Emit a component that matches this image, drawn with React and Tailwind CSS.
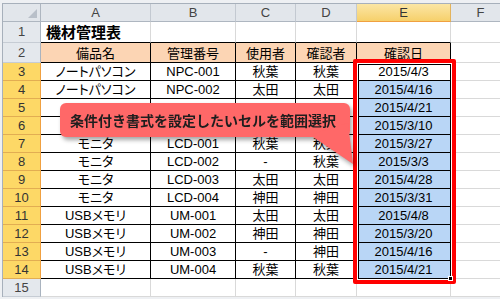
const rows = [
  ['ノートパソコン', 'NPC-001', '秋葉', '秋葉', '2015/4/3'],
  ['ノートパソコン', 'NPC-002', '太田', '太田', '2015/4/16'],
  ['', '', '', '', '2015/4/21'],
  ['', '', '', '', '2015/3/10'],
  ['モニタ', 'LCD-001', '秋葉', '秋葉', '2015/3/27'],
  ['モニタ', 'LCD-002', '-', '秋葉', '2015/3/3'],
  ['モニタ', 'LCD-003', '太田', '太田', '2015/4/28'],
  ['モニタ', 'LCD-004', '神田', '神田', '2015/3/31'],
  ['USBメモリ', 'UM-001', '太田', '太田', '2015/4/8'],
  ['USBメモリ', 'UM-002', '神田', '神田', '2015/3/20'],
  ['USBメモリ', 'UM-003', '-', '神田', '2015/4/16'],
  ['USBメモリ', 'UM-004', '秋葉', '秋葉', '2015/4/21'],
]

const headers = ['備品名', '管理番号', '使用者', '確認者', '確認日']

function ColHead({ label, active }) {
  if (active) {
    return (
      <div className="flex items-center justify-center border-r border-b border-r-[#e3b35c] border-b-[#f0a040] bg-linear-to-b from-[#fbe6a4] to-[#f6d06a] text-[#333]">
        {label}
      </div>
    )
  }
  return (
    <div className="flex items-center justify-center border-r border-b border-r-[#c3c9d1] border-b-[#aeb6c0] bg-[#e2e6eb] text-[#444]">
      {label}
    </div>
  )
}

function RowHead({ n, active }) {
  if (active) {
    return (
      <div className="flex items-center justify-center border-r border-b border-r-[#f0a040] border-b-[#e2ad52] bg-[#fdd866] text-[#333]">
        {n}
      </div>
    )
  }
  return (
    <div className="flex items-center justify-center border-r border-b border-r-[#a9b3bf] border-b-[#c6ccd4] bg-[#e4e8ed] text-[#444]">
      {n}
    </div>
  )
}

function Cell({ children, className = '' }) {
  return (
    <div className={'flex items-center justify-center whitespace-nowrap ' + className}>
      {children}
    </div>
  )
}

const grid = 'border-r border-b border-[#d9d9d9]'
const black = 'border-r border-b border-black'

export default function App() {
  return (
    <div className="relative w-[500px] h-[299px] overflow-hidden bg-[#eef0f3] pt-[3px] pl-[2px] font-['Liberation_Sans','Noto_Sans_CJK_JP',sans-serif] text-[13px] text-black">
      <div className="grid grid-cols-[38px_110px_85px_60px_61px_94px_60px] grid-rows-[18px_21px_20px_repeat(12,18px)_18px] border-t border-l border-[#a7b0bb] bg-white">
        {/* column headers */}
        <div className="relative border-r border-b border-r-[#aeb6c0] border-b-[#aeb6c0] bg-[#e2e6eb]">
          <svg className="absolute right-[3px] bottom-[3px]" width="9" height="9" viewBox="0 0 9 9">
            <polygon points="9,0 9,9 0,9" fill="#b9c0c9" />
          </svg>
        </div>
        {['A', 'B', 'C', 'D', 'E', 'F'].map((c) => (
          <ColHead key={c} label={c} active={c === 'E'} />
        ))}

        {/* row 1 */}
        <RowHead n={1} />
        <div className="flex items-center pl-[5px] border-r border-b border-r-[#d9d9d9] border-b-black text-[15px] font-bold font-['Noto_Sans_CJK_JP',sans-serif]">
          機材管理表
        </div>
        <div className="border-r border-b border-r-[#d9d9d9] border-b-black" />
        <div className="border-r border-b border-r-[#d9d9d9] border-b-black" />
        <div className="border-r border-b border-r-[#d9d9d9] border-b-black" />
        <div className="border-r border-b border-r-[#d9d9d9] border-b-black" />
        <div className={grid} />

        {/* row 2 */}
        <RowHead n={2} />
        {headers.map((h) => (
          <Cell key={h} className={black + ' bg-[#fcd5b4] font-[Noto_Sans_CJK_JP]'}>
            {h}
          </Cell>
        ))}
        <div className={grid} />

        {/* data rows */}
        {rows.map((r, i) => (
          <div key={i} className="contents">
            <RowHead n={i + 3} active />
            {r.map((v, j) => (
              <Cell
                key={j}
                className={
                  black +
                  (j === 4 ? (i === 0 ? ' bg-white' : ' bg-[#b9d6f6]') : '') +
                  ' [font-feature-settings:"palt"]'
                }
              >
                {v}
              </Cell>
            ))}
            <div className={grid} />
          </div>
        ))}

        {/* row 15 */}
        <RowHead n={15} />
        <div className={grid} />
        <div className={grid} />
        <div className={grid} />
        <div className={grid} />
        <div className={grid} />
        <div className={grid} />
      </div>

      {/* selection frame */}
      <div className="absolute left-[353px] top-[59px] w-[103px] h-[225px] border-[4px] border-[#ff0000] rounded-[2px]">
        <div className="h-full w-full border border-white">
          <div className="h-full w-full border border-black" />
        </div>
        <div className="absolute right-[-1px] bottom-[-1px] w-[5px] h-[5px] bg-black border border-white" />
      </div>

      {/* callout */}
      <div className="absolute left-[60px] top-[103px] w-[300px] h-[64px] [filter:drop-shadow(2px_3px_2px_rgba(0,0,0,0.35))]">
        <div className="absolute left-0 top-0 w-[290px] h-[34px] rounded-[6px] bg-[#ff6868]" />
        <svg className="absolute left-0 top-0" width="300" height="64" viewBox="0 0 300 64">
          <polygon points="250,32 288,20 293,61" fill="#ff6868" />
        </svg>
        <div className="absolute left-[10px] top-0 h-[34px] flex items-center whitespace-nowrap text-[14px] font-bold text-[#1e1e1e] font-['Noto_Sans_CJK_JP',sans-serif]">
          条件付き書式を設定したいセルを範囲選択
        </div>
      </div>
    </div>
  )
}
